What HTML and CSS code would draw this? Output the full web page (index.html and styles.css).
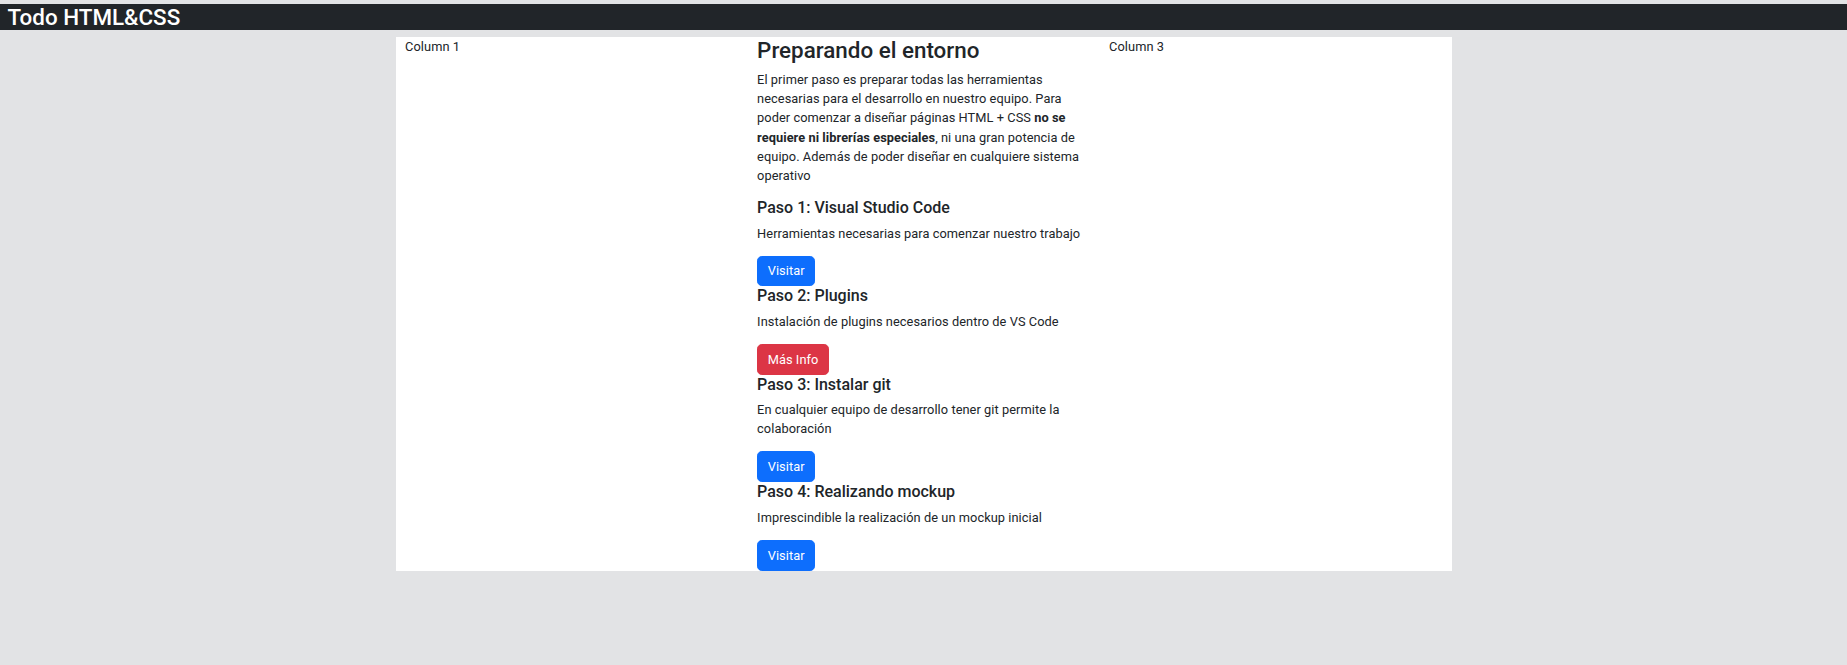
FILE: index.html
```html
<!DOCTYPE html>
<html lang="es">
<head>
<meta charset="utf-8">
<title>Todo HTML&amp;CSS</title>
<link rel="stylesheet" href="styles.css">
</head>
<body>
<h3 class="topbar">Todo HTML&amp;CSS</h3>
<main class="container">
  <div class="col">Column 1</div>
  <div class="col steps">
    <h3 class="title">Preparando el entorno</h3>
    <p class="text">El primer paso es preparar todas las herramientas necesarias para el desarrollo en nuestro equipo. Para poder comenzar a diseñar páginas HTML + CSS <strong>no se requiere ni librerías especiales</strong>, ni una gran potencia de equipo. Además de poder diseñar en cualquiere sistema operativo</p>

    <h5 class="step-title">Paso 1: Visual Studio Code</h5>
    <p class="text">Herramientas necesarias para comenzar nuestro trabajo</p>
    <a class="btn btn-primary" href="#">Visitar</a>

    <h5 class="step-title">Paso 2: Plugins</h5>
    <p class="text">Instalación de plugins necesarios dentro de VS Code</p>
    <a class="btn btn-danger" href="#">Más Info</a>

    <h5 class="step-title">Paso 3: Instalar git</h5>
    <p class="text">En cualquier equipo de desarrollo tener git permite la colaboración</p>
    <a class="btn btn-primary" href="#">Visitar</a>

    <h5 class="step-title">Paso 4: Realizando mockup</h5>
    <p class="text">Imprescindible la realización de un mockup inicial</p>
    <a class="btn btn-primary" href="#">Visitar</a>
  </div>
  <div class="col">Column 3</div>
</main>
</body>
</html>
```
FILE: styles.css
```css
* { box-sizing: border-box; }

body {
  margin: 0;
  background: #e2e3e5;
  color: #212529;
  font-family: "Roboto", "Liberation Sans", sans-serif;
  font-size: 12.8px;
  line-height: 1.5;
  letter-spacing: 0.06px;
}

.topbar {
  margin: 3.5px 0 6.4px;
  padding: 0 0 0 7.5px;
  background: #212529;
  color: #ffffff;
  font-size: 22.4px;
  font-weight: 500;
  line-height: 1.2;
  letter-spacing: 0;
}

.container {
  width: 1056px;
  margin: 0 auto;
  background: #ffffff;
  display: grid;
  grid-template-columns: repeat(3, 1fr);
}

.col {
  padding: 0 9.6px;
  min-width: 0;
}

.steps {
  display: flex;
  flex-direction: column;
  align-items: flex-start;
}

.title {
  margin: 0 0 6.4px;
  font-size: 22.4px;
  font-weight: 500;
  line-height: 1.2;
  letter-spacing: 0;
}

.step-title {
  margin: 0 0 6.4px;
  font-size: 16px;
  font-weight: 500;
  line-height: 1.2;
  letter-spacing: 0;
}

.text {
  margin: 0 0 12.8px;
}

.text strong { font-weight: 700; }

.btn {
  display: block;
  padding: 4.8px 9.6px;
  border: 0.8px solid transparent;
  border-radius: 4.8px;
  color: #ffffff;
  text-decoration: none;
  font-size: 12.8px;
  line-height: 1.5;
}

.btn-primary {
  background: #0d6efd;
  border-color: #0d6efd;
}

.btn-danger {
  background: #dc3545;
  border-color: #dc3545;
}
```
